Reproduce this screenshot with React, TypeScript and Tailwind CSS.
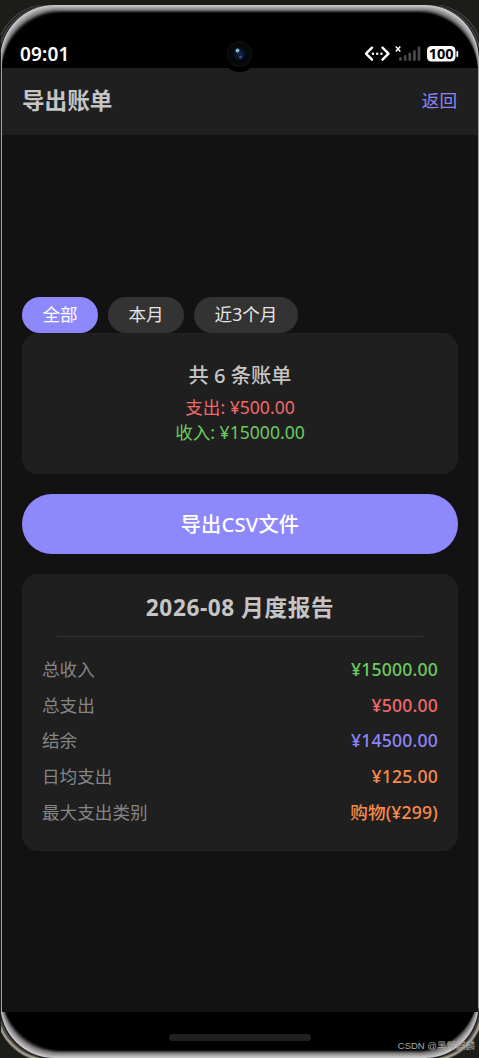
import React from "react";
import clsx from "clsx";

// Filter chips
const filters = [
  { label: "全部", width: "w-[76px]", active: true },
  { label: "本月", width: "w-[76px]", active: false },
  { label: "近3个月", width: "w-[104px]", active: false },
];

// Monthly report rows
const report = [
  { label: "总收入", value: "¥15000.00", color: "text-[#6bcb5f]" },
  { label: "总支出", value: "¥500.00", color: "text-[#f2686a]" },
  { label: "结余", value: "¥14500.00", color: "text-[#8c86f8]" },
  { label: "日均支出", value: "¥125.00", color: "text-[#fa8a4a]" },
  { label: "最大支出类别", value: "购物(¥299)", color: "text-[#fa8a4a]" },
];

// Metal rim, from the outer edge towards the glass
const rim = ["#c9c5c8", "#bdb9bc", "#aaa7a9", "#969496", "#828082", "#646264", "#3c3b3c", "#161616"];

const PhoneFrame = () => (
  <svg viewBox="0 0 479 1058" className="absolute inset-0 w-full h-full" fill="none">
    <defs>
      <clipPath id="body">
        <rect x="1" y="5" width="478" height="1053" />
      </clipPath>
      <filter id="soft" x="-10%" y="-10%" width="120%" height="120%">
        <feGaussianBlur stdDeviation="0.5" />
      </filter>
    </defs>
    <g clipPath="url(#body)">
      <rect x="-4" y="4" width="487" height="1058" rx="52" fill="#4b4a48" />
      <rect x="-3" y="4.5" width="485" height="1056.5" rx="52" fill="#1d1d1c" />
      <rect x="-1.8" y="5" width="482.6" height="1055" rx="53" fill="#5b5a58" />
      <rect x="-0.8" y="5" width="480.6" height="1054" rx="53" fill="#242424" />
      {rim.map((color, i) => (
        <rect
          key={color}
          x={0.3 + i * 0.2}
          y={5 + i}
          width={478.4 - i * 0.4}
          height={1053 - i * 2}
          rx={54 + i * 0.7}
          fill={color}
        />
      ))}
      <rect x="2" y="13" width="476" height="1037" rx="60" fill="#000" />
      <path d="M-3 1008A52 52 0 0 0 49 1060" stroke="#a39a8a" strokeWidth="2.4" filter="url(#soft)" />
      <path d="M482 1008A52 52 0 0 1 430 1060" stroke="#a39a8a" strokeWidth="2.4" filter="url(#soft)" />
      <path d="M1.5 56V1008" stroke="#a5a3a0" />
      <path d="M478.5 56V1008" stroke="#a5a3a0" />
    </g>
  </svg>
);

const Camera = () => (
  <svg viewBox="0 0 38 38" className="absolute left-[220px] top-[35px] z-10 w-[38px] h-[38px]">
    <defs>
      <radialGradient id="lens">
        <stop offset="0" stopColor="#15284a" />
        <stop offset="0.6" stopColor="#0b1428" />
        <stop offset="1" stopColor="#050608" />
      </radialGradient>
    </defs>
    <circle cx="19.5" cy="19" r="18" fill="#000" />
    <circle cx="19.5" cy="19" r="12" fill="#060708" stroke="#0c0d0f" strokeWidth="2" />
    <circle cx="19.5" cy="19" r="7.5" fill="url(#lens)" />
    <circle cx="17.5" cy="15.5" r="1.9" fill="#86b6d8" />
    <circle cx="20.5" cy="22" r="1.6" fill="#2c5590" />
  </svg>
);

const StatusIcons = () => (
  <svg viewBox="0 0 96 20" className="w-[96px] h-5" fill="none">
    {/* Network link */}
    <path d="M8 3.7L2 9.7l6 6M18.5 3.7l6 6-6 6" stroke="#fff" strokeWidth="2.4" strokeLinecap="round" strokeLinejoin="round" />
    <circle cx="9" cy="9.7" r="1.2" fill="#fff" />
    <circle cx="13.2" cy="9.7" r="1.2" fill="#fff" />
    <circle cx="17.4" cy="9.7" r="1.2" fill="#fff" />
    {/* No signal */}
    <path d="M31.8 2.5l4.5 5M36.3 2.500l-4.5 5" stroke="#fff" strokeWidth="1.5" />
    <path d="M36.500 14.500v1.200M41.200 12.500v3.200M45.800 10v5.700M50.400 7.500v8.200M55 4v11.700" stroke="#484848" strokeWidth="2.8" strokeLinecap="round" />
    {/* Battery */}
    <rect x="63" y="2" width="28.5" height="15.5" rx="4.5" fill="#fff" />
    <path d="M93.3 8v4" stroke="#fff" strokeWidth="1.8" strokeLinecap="round" />
    <text x="77.2" y="15" textAnchor="middle" fill="#000" fontSize="14.5" fontWeight="700" fontFamily="Noto Sans">100</text>
  </svg>
);

export default function App() {
  return (
    <div className="relative w-[479px] h-[1058px] overflow-hidden bg-[#1c1d18] font-['Noto_Sans','Noto_Sans_CJK_SC',sans-serif] text-[17.6px]">
      <PhoneFrame />
      <Camera />

      <div className="relative flex flex-col h-full pl-[2px] pr-px">
        {/* Status bar */}
        <div className="h-[68px] pt-10 pl-[18px] pr-[18px] flex items-center justify-between">
          <span className="text-[19px] leading-none tracking-[0.01em] font-semibold text-white">09:01</span>
          <StatusIcons />
        </div>

        {/* Header */}
        <header className="h-[67px] shrink-0 pl-5 pr-[21px] pb-0.5 flex items-center justify-between bg-[#1f1f1f]">
          <h1 className="text-[22.6px] font-bold text-[#c5c5c5]">导出账单</h1>
          <button className="text-[17.6px] text-[#8c86f8]">返回</button>
        </header>

        <main className="flex-1 px-5 bg-[#121212]">
          {/* Filters */}
          <div className="pt-[162px] flex gap-2.5">
            {filters.map((item) => (
              <button
                key={item.label}
                className={clsx(
                  "h-9 pb-px rounded-full flex items-center justify-center",
                  item.width,
                  item.active ? "bg-[#8e88fd] text-white" : "bg-[#333333] text-[#e5e5e5]"
                )}
              >
                {item.label}
              </button>
            ))}
          </div>

          {/* Summary */}
          <section className="h-[141px] pt-[27px] rounded-2xl bg-[#1f1f1f] text-center">
            <p className="text-[20.2px] leading-[30px] font-medium text-[#c5c5c5]">共 6 条账单</p>
            <p className="mt-[5px] leading-[25px] text-[#f2686a]">支出: ¥500.00</p>
            <p className="leading-[25px] text-[#6bcb5f]">收入: ¥15000.00</p>
          </section>

          <button className="mt-5 w-full h-[60px] rounded-full bg-[#8e88fd] text-[20.2px] tracking-[0.01em] font-medium text-white">
            导出CSV文件
          </button>

          {/* Monthly report */}
          <section className="mt-5 h-[277px] px-5 pt-[17px] rounded-2xl bg-[#1f1f1f]">
            <h2 className="text-[22.6px] leading-[34px] tracking-[0.027em] font-bold text-center text-[#c5c5c5]">2026-08 月度报告</h2>
            <div className="mt-[11px] mx-[15px] h-px bg-[#333333]" />
            <div className="mt-3.5">
              {report.map((row) => (
                <div key={row.label} className="h-[35.8px] flex items-center justify-between">
                  <span className="text-[#858585]">{row.label}</span>
                  <span className={clsx("tracking-[0.01em] font-medium", row.color)}>{row.value}</span>
                </div>
              ))}
            </div>
          </section>
        </main>

        {/* Home indicator */}
        <div className="h-[46px] shrink-0 pt-[22px] pr-px flex justify-center">
          <div className="w-[142px] h-[7px] rounded-full bg-[#1f1f1f]" />
        </div>
      </div>

      <span className="absolute right-1 bottom-[5px] text-[9.5px] leading-[14px] whitespace-nowrap font-['Liberation_Sans','Noto_Sans_CJK_SC',sans-serif] text-[#aaaaaa]">
        CSDN @黑臂麒麟
      </span>
    </div>
  );
}
